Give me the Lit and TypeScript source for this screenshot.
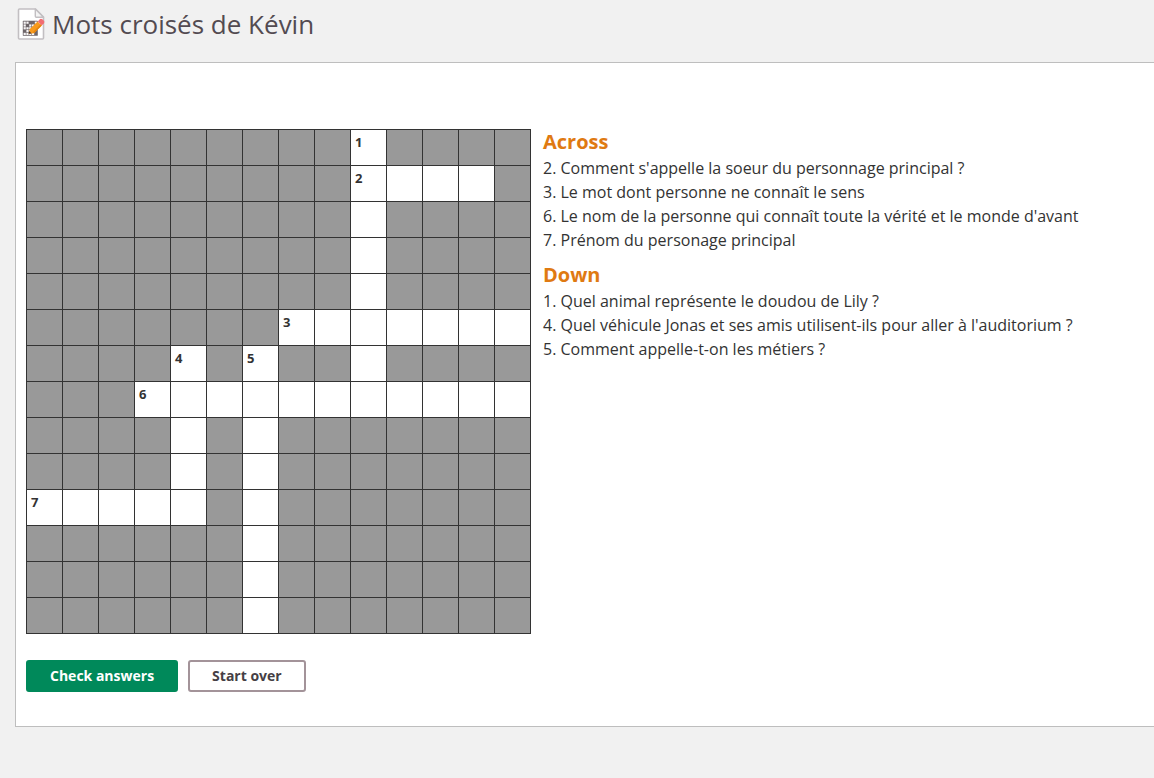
import { LitElement, html, css, svg, nothing } from "lit";
import { customElement } from "lit/decorators.js";

// "#" is a blocked square, "." an empty letter square, a digit a numbered letter square.
const GRID = [
  "#########1####",
  "#########2...#",
  "#########.####",
  "#########.####",
  "#########.####",
  "#######3......",
  "####4#5##.####",
  "###6..........",
  "####.#.#######",
  "####.#.#######",
  "7....#.#######",
  "######.#######",
  "######.#######",
  "######.#######",
];

const CLUES = [
  {
    title: "Across",
    items: [
      "2. Comment s'appelle la soeur du personnage principal ?",
      "3. Le mot dont personne ne connaît le sens",
      "6. Le nom de la personne qui connaît toute la vérité et le monde d'avant",
      "7. Prénom du personage principal",
    ],
  },
  {
    title: "Down",
    items: [
      "1. Quel animal représente le doudou de Lily ?",
      "4. Quel véhicule Jonas et ses amis utilisent-ils pour aller à l'auditorium ?",
      "5. Comment appelle-t-on les métiers ?",
    ],
  },
];

@customElement("crossword-icon")
export class CrosswordIcon extends LitElement {
  static styles = css`
    :host { display: block; flex: none; width: 28px; height: 32px; }
    svg { display: block; }
  `;
  render() {
    const dark = [[2, 0], [3, 0], [1, 1], [0, 3], [4, 3], [4, 4]];
    return html`<svg width="28" height="32" viewBox="0 0 28 32" aria-hidden="true">
      <path d="M2.500 1H18.500L26.500 9V30Q26.500 31 25.500 31H2.500Q1.500 31 1.500 30V2Q1.500 1 2.500 1Z" fill="#fff" stroke="#c2bfc2" stroke-width="1.600" stroke-linejoin="round"/>
      <path d="M18.300 1V8.300Q18.300 9.300 19.300 9.300H26.500Z" fill="#f4f4f4" stroke="#c2bfc2" stroke-width="1.400" stroke-linejoin="round"/>
      <rect x="5.800" y="12.800" width="15" height="15" rx=".6" fill="#6d6569"/>
      ${[0, 1, 2, 3, 4].map((r) => [0, 1, 2, 3, 4].map((c) =>
        dark.some(([x, y]) => x === c && y === r) ? nothing
          : svg`<rect x=${6.6 + c * 2.8} y=${13.6 + r * 2.8} width="2.200" height="2.200" fill="#f8f6f7"/>`))}
      <path d="M11.600 25.800L12.800 20.900L20.600 13.400L24.800 17.500L17 25.200Z" fill="#f89a1c"/>
      <path d="M16 24.200L23.600 16.300L24.800 17.500L17 25.200Z" fill="#e2840f"/>
      <path d="M11.600 25.800L12.300 23L14.400 25.500Z" fill="#3f3538"/>
      <path d="M20.800 13.500L22.800 11.300Q24 10.200 25.300 11.300L26.900 12.800Q28 14 26.900 15.300L24.800 17.500Z" fill="#f26d72"/>
    </svg>`;
  }
}

@customElement("app-root")
export class AppRoot extends LitElement {
  static styles = css`
    :host {
      display: block;
      box-sizing: border-box;
      min-height: 100vh;
      background: #f1f1f1;
      color: #333;
      font: 16px/24px "Open Sans", "Noto Sans", sans-serif;
    }
    .header { display: flex; align-items: center; gap: 7px; padding: 8px 17px 0; }
    h1 { margin: 0; color: #534b51; font-size: 26px; line-height: 32px; font-weight: 400; }
    .panel {
      margin: 22px 0 0 15px;
      padding: 66px 10px 34px;
      border: 1px solid #bebebe;
      border-right: 0;
      background: #fff;
    }
    .game { display: flex; align-items: flex-start; gap: 12px; }
    .board { flex: none; border-collapse: collapse; }
    td { box-sizing: border-box; width: 36px; height: 36px; padding: 0; border: 1px solid #333; }
    .blocked { background: #999; }
    .cell { display: grid; height: 35px; }
    .number { grid-area: 1 / 1; padding: 4px; font-size: 13px; line-height: 16px; font-weight: 700; }
    input {
      grid-area: 1 / 1;
      box-sizing: border-box;
      width: 35px;
      height: 35px;
      padding: 0;
      border: 0;
      background: transparent;
      color: inherit;
      font: inherit;
      text-align: center;
      text-transform: uppercase;
    }
    h2 { margin: 0; padding-bottom: 2px; color: #df7a12; font-size: 20px; line-height: 25px; font-weight: 700; }
    ul { margin: 0 0 10px; padding: 0; list-style: none; }
    .actions { display: flex; gap: 10px; margin-top: 26px; }
    button {
      box-sizing: border-box;
      height: 32px;
      padding: 0 22px;
      border: 2px solid #00895a;
      border-radius: 3px;
      background: #00895a;
      color: #fff;
      font: 700 14px/20px "Open Sans", "Noto Sans", sans-serif;
    }
    .secondary { border-color: #a39399; background: #fff; color: #463f45; }
  `;

  render() {
    return html`
      <header class="header">
        <crossword-icon></crossword-icon>
        <h1>Mots croisés de Kévin</h1>
      </header>
      <main class="panel">
        <div class="game">
          <table class="board" aria-label="Mots croisés">
            <tbody>
              ${GRID.map((row, r) => html`<tr>${[...row].map((cell, c) => cell === "#"
                ? html`<td class="blocked"></td>`
                : html`<td><label class="cell">
                    ${cell === "." ? nothing : html`<span class="number">${cell}</span>`}
                    <input type="text" maxlength="1" autocomplete="off" aria-label=${`${r + 1}, ${c + 1}`} />
                  </label></td>`)}</tr>`)}
            </tbody>
          </table>
          <div class="clues">
            ${CLUES.map((group) => html`<section>
              <h2>${group.title}</h2>
              <ul>${group.items.map((item) => html`<li>${item}</li>`)}</ul>
            </section>`)}
          </div>
        </div>
        <div class="actions">
          <button type="button">Check answers</button>
          <button type="button" class="secondary">Start over</button>
        </div>
      </main>
    `;
  }
}
